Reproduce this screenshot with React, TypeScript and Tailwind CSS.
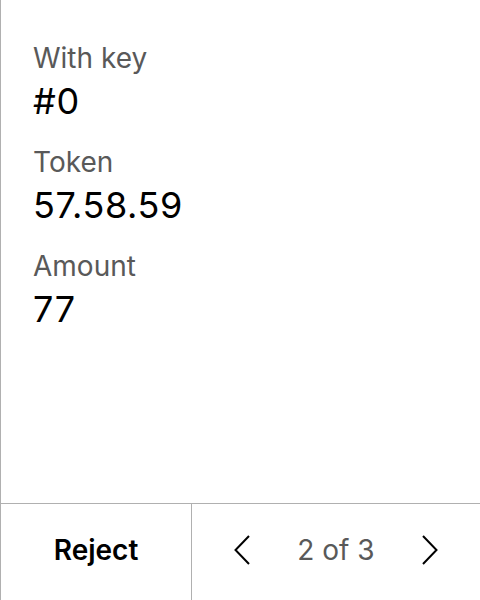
import { ReactNode } from 'react'

interface FieldProps {
  label: string
  value: string
}

function Field({ label, value }: FieldProps) {
  return (
    <div className="flex flex-col">
      <div className="text-[28px] leading-[34px] text-[#595959]">{label}</div>
      <div className="mt-[6px] text-[36px] leading-10 tracking-[0.6px] text-black">{value}</div>
    </div>
  )
}

function Chevron({ dir }: { dir: 'left' | 'right' }): ReactNode {
  return (
    <svg width="16" height="30" viewBox="0 0 16 30" fill="none" stroke="black" strokeWidth="2">
      {dir === 'left' ? <polyline points="15,1 1.5,15 15,29" /> : <polyline points="1,1 14.5,15 1,29" />}
    </svg>
  )
}

export default function App() {
  return (
    <div
      className="h-[600px] w-[480px] flex flex-col border-l border-[#b0b0b0] bg-white"
      style={{ fontFamily: 'Inter, "Noto Sans", sans-serif' }}
    >
      <div className="flex-1 flex flex-col gap-6 pl-8 pt-[41px]">
        <Field label="With key" value="#0" />
        <Field label="Token" value="57.58.59" />
        <Field label="Amount" value="77" />
      </div>

      <div className="h-[97px] flex border-t border-[#b0b0b0]">
        <button className="w-[191px] flex items-center justify-center pb-1 border-r border-[#b0b0b0] text-[28px] font-semibold text-black">
          Reject
        </button>
        <div className="flex-1 flex items-center justify-center gap-[47px] pb-1">
          <button className="flex items-center">
            <Chevron dir="left" />
          </button>
          <span className="text-[28px] text-[#595959]">2 of 3</span>
          <button className="flex items-center">
            <Chevron dir="right" />
          </button>
        </div>
      </div>
    </div>
  )
}
